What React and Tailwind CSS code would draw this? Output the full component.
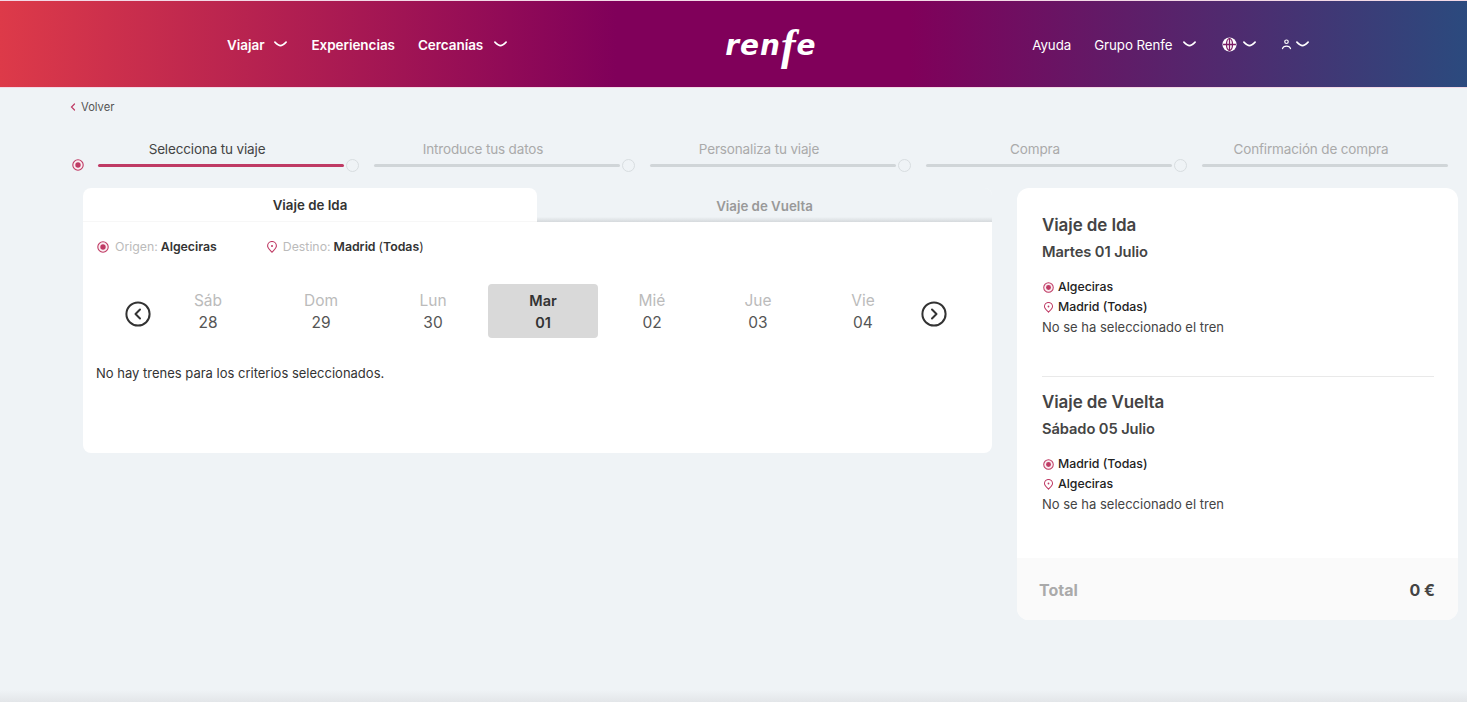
function Chev({ className = "" }) {
  return (
    <svg viewBox="0 0 14 6" className={`w-[13px] h-[6px] mb-[3px] ${className}`} fill="none" stroke="currentColor" strokeWidth="1.8" strokeLinecap="round" strokeLinejoin="round">
      <path d="M1 1 Q4.8 4.8 7 4.8 Q9.2 4.8 13 1" />
    </svg>
  );
}

function Radio({ size = 12 }) {
  return (
    <svg viewBox="0 0 12 12" width={size} height={size} className="shrink-0">
      <circle cx="6" cy="6" r="5.2" fill="#fbeef2" stroke="#bf3a64" strokeWidth="1.1" />
      <circle cx="6" cy="6" r="2.7" fill="#bf3a64" />
    </svg>
  );
}

function Pin({ size = 12 }) {
  return (
    <svg viewBox="0 0 12 12" width={size} height={size} className="shrink-0" fill="none" stroke="#bf3a64" strokeWidth="1.1">
      <path d="M6 11.2 C4.4 9.4 1.6 7 1.6 4.9 A4.4 4.4 0 0 1 10.4 4.9 C10.4 7 7.6 9.4 6 11.2 Z" />
      <circle cx="6" cy="4.9" r="1" fill="#bf3a64" stroke="none" />
    </svg>
  );
}

function Arrow({ dir }) {
  return (
    <svg viewBox="0 0 26 26" className="w-[26px] h-[26px] mt-[6px]" fill="none" stroke="#333" strokeWidth="2" strokeLinecap="round" strokeLinejoin="round">
      <circle cx="13" cy="13" r="11.6" />
      <path d={dir === "left" ? "M15 8.5 L10.5 13 L15 17.5" : "M11 8.5 L15.5 13 L11 17.5"} />
    </svg>
  );
}

const steps = ["Selecciona tu viaje", "Introduce tus datos", "Personaliza tu viaje", "Compra", "Confirmación de compra"];

const days = [
  { d: "Sáb", n: "28", w: "w-[112px]" },
  { d: "Dom", n: "29", w: "w-[114px]" },
  { d: "Lun", n: "30", w: "w-[110px]" },
  { d: "Mar", n: "01", w: "w-[110px]", on: true },
  { d: "Mié", n: "02", w: "w-[108px]" },
  { d: "Jue", n: "03", w: "w-[104px]" },
  { d: "Vie", n: "04", w: "w-[106px]" },
];

function Trip({ title, date, from, to, className = "" }) {
  return (
    <div className={className}>
      <div className="text-[17px] leading-[24px] font-semibold text-[#444] tracking-[-0.1px]">{title}</div>
      <div className="mt-[3px] text-[14.7px] leading-[24px] font-semibold text-[#444] tracking-[-0.1px]">{date}</div>
      <div className="mt-[13px] flex items-center gap-[4px] pl-[1px] text-[12.3px] leading-[20px] font-medium text-[#222]"><Radio size={11} />{from}</div>
      <div className="flex items-center gap-[4px] pl-[1px] text-[12.3px] leading-[20px] font-medium text-[#222]"><Pin size={11} />{to}</div>
      <div className="text-[13px] leading-[20px] text-[#444]">No se ha seleccionado el tren</div>
    </div>
  );
}

export default function App() {
  return (
    <div className="h-[704px] w-[1467px] overflow-hidden flex flex-col bg-[#eff3f6] font-['Inter','Liberation_Sans',sans-serif]">
      <header className="h-[88px] shrink-0 border-y border-[#f3d9e6] pt-[3px] bg-[linear-gradient(90deg,#dd3a49_0%,#80005a_42%,#80005a_62%,#2b4a7e_100%)] text-white flex items-center">
        <nav className="flex items-center ml-[227px] text-[13.5px] font-semibold tracking-[-0.05px]">
          <span>Viajar</span><Chev className="ml-[10px]" />
          <span className="ml-[24px]">Experiencias</span>
          <span className="ml-[23px]">Cercanías</span><Chev className="ml-[11px]" />
        </nav>
        <div className="ml-[218px] w-[88px] h-[50px] flex items-center italic font-bold font-['DejaVu_Sans',sans-serif] text-[28px] leading-none tracking-[1px]">
          <span>ren</span>
          <span className="font-['Liberation_Serif',serif] text-[44px]">f</span>
          <span>e</span>
        </div>
        <nav className="flex items-center ml-[219px] text-[13.3px] tracking-[-0.05px]">
          <span>Ayuda</span>
          <span className="ml-[23px]">Grupo Renfe</span><Chev className="ml-[10px]" />
          <svg viewBox="0 0 14 14" className="ml-[26px] w-[15px] h-[15px] mb-[3px]" fill="none" stroke="#7c1f66" strokeWidth="1.2">
            <circle cx="7" cy="7" r="6.6" fill="#fff" stroke="none" />
            <path d="M1 7 H13 M7 1 V13" />
            <ellipse cx="7" cy="7" rx="2.8" ry="5.4" />
          </svg>
          <Chev className="ml-[6px]" />
          <svg viewBox="0 0 12 12" className="ml-[25px] w-[11px] h-[11px] mb-[2px]" fill="none" stroke="currentColor" strokeWidth="1.3" strokeLinecap="round">
            <circle cx="6" cy="3" r="1.9" />
            <path d="M1.6 10.6 C2.6 6.8 9.4 6.8 10.4 10.6" />
          </svg>
          <Chev className="ml-[4px]" />
        </nav>
      </header>

      <main className="flex-1 min-h-0">
        <div className="ml-[70px] mt-[11px] flex items-center gap-[5px] text-[11.2px] leading-[16px] text-[#555]">
          <svg viewBox="0 0 6 8" className="w-[6px] h-[8px]" fill="none" stroke="#bf3a64" strokeWidth="1.2" strokeLinecap="round"><path d="M4.5 1 L1.5 4 L4.5 7" /></svg>
          Volver
        </div>

        <div className="ml-[69px] mt-[24px] flex">
          {steps.map((s, i) => (
            <div key={s} className="w-[276px]">
              <div className={`text-center text-[13.5px] leading-[20px] tracking-[-0.15px] ${i === 0 ? "text-[#444]" : "text-[#aaa]"}`}>{s}</div>
              <div className="-mt-[1px] flex items-center h-[14px]">
                {i === 0 ? (
                  <div className="ml-[2px] w-[13px] flex justify-center"><Radio size={12} /></div>
                ) : (
                  <div className="ml-[1px] w-[13px] h-[13px] rounded-full border border-[#d8dde0] bg-[#eff3f6]" />
                )}
                <div className={`h-[3px] rounded-full w-[246px] ${i === 0 ? "ml-[14px] bg-[#bf3a64]" : "ml-[15px] bg-[#d0d5d8]"}`} />
              </div>
            </div>
          ))}
        </div>

        <div className="mt-[16px] ml-[83px] flex items-start gap-[25px]">
          <section className="w-[909px] h-[265px] rounded-lg bg-white overflow-hidden">
            <div className="flex h-[34px] pt-0 text-[13.3px] font-semibold bg-[#eff3f6]">
              <div className="w-[454px] pt-[3px] flex items-center justify-center bg-white rounded-t-lg text-[#333] border-b border-[#f7f7f7]">Viaje de Ida</div>
              <div className="flex-1 pt-[3px] flex items-center justify-center bg-[linear-gradient(180deg,#eff3f6_0%,#eff3f6_85%,#d5d9dc_100%)] text-[#999]">Viaje de Vuelta</div>
            </div>
            <div className="flex items-center h-[50px] pl-[14px] text-[12.3px]">
              <Radio size={12} />
              <span className="ml-[6px] text-[#bbb]">Origen:</span>
              <span className="ml-[3px] font-semibold text-[#333]">Algeciras</span>
              <span className="ml-[49px]"><Pin size={12} /></span>
              <span className="ml-[5px] text-[#bbb]">Destino:</span>
              <span className="ml-[3px] font-semibold text-[#333]">Madrid</span>
              <span className="ml-[3px] text-[#333]">(<b className="font-semibold">Todas</b>)</span>
            </div>
            <div className="flex items-center h-[54px] mt-[12px] pl-[42px]">
              <Arrow dir="left" />
              <div className="ml-[1px] flex">
                {days.map((x) => (
                  <div key={x.d} className={`${x.w} h-[54px] pt-[2px] flex flex-col items-center justify-center text-[15.5px] leading-[22px] ${x.on ? "bg-[#d9d9d9] rounded font-semibold text-[#333]" : ""}`}>
                    <span className={x.on ? "text-[14.5px]" : "text-[#bbb]"}>{x.d}</span>
                    <span className={x.on ? "text-[14.5px]" : "text-[#555]"}>{x.n}</span>
                  </div>
                ))}
              </div>
              <div className="ml-[5px]"><Arrow dir="right" /></div>
            </div>
            <div className="mt-[25px] pl-[13px] text-[13px] leading-[20px] text-[#333]">No hay trenes para los criterios seleccionados.</div>
          </section>

          <aside className="w-[441px] h-[432px] rounded-xl bg-white overflow-hidden flex flex-col">
            <div className="flex-1 px-[25px] pt-[25px]">
              <Trip title="Viaje de Ida" date="Martes 01 Julio" from="Algeciras" to="Madrid (Todas)" />
              <div className="mt-[39px] w-[392px] h-px bg-[#e9e9e9]" />
              <Trip className="mt-[13px]" title="Viaje de Vuelta" date="Sábado 05 Julio" from="Madrid (Todas)" to="Algeciras" />
            </div>
            <div className="h-[62px] pt-[2px] bg-[#fafafa] flex items-center justify-between pl-[22px] pr-[23px] text-[16px] font-bold">
              <span className="text-[#aaa]">Total</span>
              <span className="text-[#444]">0 €</span>
            </div>
          </aside>
        </div>
      </main>

      <footer className="h-[14px] shrink-0 bg-[linear-gradient(180deg,#eff3f6_0%,#e3e6e9_85%,#ffffff_86%)]" />
    </div>
  );
}
